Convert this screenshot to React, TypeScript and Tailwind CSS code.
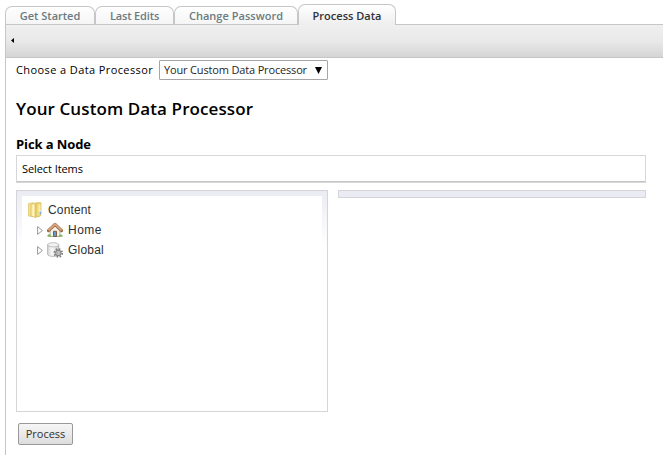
import React from "react";

function Tab({ label, className }: { label: string; className: string }) {
  return (
    <div
      className={`flex shrink-0 justify-center whitespace-nowrap border border-b-0 border-[#c6c6c8] bg-linear-to-b ${className}`}
    >
      {label}
    </div>
  );
}

function FolderIcon() {
  return (
    <svg width="16" height="18" viewBox="0 0 16 18" className="shrink-0">
      <defs>
        <linearGradient id="folder" x1="0" x2="1">
          <stop offset="0" stopColor="#f8e89c" />
          <stop offset=".5" stopColor="#fff5bd" />
          <stop offset="1" stopColor="#e2c25a" />
        </linearGradient>
      </defs>
      <path d="M8 3 9.5 1.8H14V14l-2 1.7H8z" fill="#f0d878" stroke="#d6b95c" strokeWidth=".8" />
      <path d="M11.5 3.5h2v9l-2 1.5z" fill="#f8ecb0" />
      <path d="M1.5 2.6 6.5 1.6v14l-5-.6z" fill="#f5e290" stroke="#dcc067" strokeWidth=".7" />
      <path d="M4 3.4 9 2v14.4l-5-1.2z" fill="url(#folder)" stroke="#d6b755" strokeWidth=".7" />
      <path d="M12.2 9.5h1.8v4h-1.8z" fill="#fff" />
      <path d="M12.5 10.5h1.4v3h-1.4z" fill="#69a9da" />
    </svg>
  );
}

function HomeIcon() {
  return (
    <svg width="16" height="16" viewBox="0 0 16 16" className="shrink-0">
      <path d="M3 8v6.5h10V8L8 3.5z" fill="#f4f1e7" stroke="#a5a08f" strokeWidth=".8" />
      <path d="M6.5 14.5V9.3h3v5.2z" fill="#659bc0" stroke="#75563a" strokeWidth=".9" />
      <path d="m1.5 8.6 6.5-6.3 6.5 6.3" fill="none" stroke="#9a6843" strokeWidth="3.1" strokeLinejoin="round" strokeLinecap="round" />
      <path d="m1.5 8.4 6.5-6.3 6.5 6.3" fill="none" stroke="#dca77e" strokeWidth="1.8" strokeLinejoin="round" />
      <path d="M.5 13.2c1-1.5 3.2-1.2 3.9 1.6H.5zM11.4 14.8c.6-2.6 3.2-3 4.1-1.4v1.4z" fill="#80b35c" />
    </svg>
  );
}

function DatabaseGearIcon() {
  return (
    <svg width="16" height="16" viewBox="0 0 16 16" className="shrink-0">
      <defs>
        <linearGradient id="cylinder" x1="0" x2="1">
          <stop offset="0" stopColor="#d4d4d4" />
          <stop offset=".4" stopColor="#fafafa" />
          <stop offset="1" stopColor="#c8c8c8" />
        </linearGradient>
      </defs>
      <path d="M.6 2.8v9.5c0 2.8 11.2 2.8 11.2 0V2.8z" fill="url(#cylinder)" stroke="#adadad" strokeWidth=".8" />
      <ellipse cx="6.2" cy="2.8" rx="5.6" ry="2.1" fill="#f2f2f2" stroke="#b2b2b2" strokeWidth=".8" />
      <circle cx="11.3" cy="11" r="3.9" fill="none" stroke="#808080" strokeWidth="1.8" strokeDasharray="1.6 1.46" />
      <circle cx="11.3" cy="11" r="2.6" fill="#e3e3e3" stroke="#858585" strokeWidth="1.2" />
      <circle cx="11.3" cy="11" r="1" fill="#fff" stroke="#858585" strokeWidth=".7" />
    </svg>
  );
}

function Expander() {
  return (
    <svg width="6" height="9" viewBox="0 0 6 9" className="mr-[4px] shrink-0">
      <path d="M.6 .6v7.8l4.8-3.9z" fill="#fff" stroke="#8c8c8c" strokeWidth=".9" />
    </svg>
  );
}

export default function App() {
  return (
    <div className="h-[455px] w-[663px] overflow-hidden bg-white pl-[5px] font-['Open_Sans',sans-serif] text-[11px] text-black">
      <div className="flex h-[24px] items-end font-semibold text-[#6b7b80]">
        <Tab label="Get Started" className="h-[18px] w-[90px] rounded-t-[7px] from-white to-[#f5f5f5] leading-[18px] tracking-[0px]" />
        <Tab label="Last Edits" className="h-[18px] w-[79px] rounded-t-[7px] from-white to-[#f5f5f5] leading-[18px] tracking-[-0.15px]" />
        <Tab label="Change Password" className="h-[18px] w-[124px] rounded-t-[7px] from-white to-[#f5f5f5] leading-[18px] tracking-[0.03px]" />
        <Tab label="Process Data" className="relative z-10 -mb-px h-[21px] w-[98px] rounded-t-[7px] from-white to-[#eeeeee] leading-[22px] tracking-[0px] text-[#303038]" />
      </div>
      <div className="h-[431px] border-l border-[#c6c6c8]">
        <div className="flex h-[34px] items-center border-y border-[#c6c6c8] bg-linear-to-b from-[#efefef] via-[#e9e9e9] to-[#d5d5d5] pl-[5px]">
          <svg width="4" height="5" viewBox="0 0 4 5" className="-mt-[2px]">
            <path d="M3 0v5L0 2.5z" fill="#000" />
          </svg>
        </div>
        <div className="pl-[10px]">
          <div className="flex h-[24px] items-center whitespace-nowrap">
            <span className="w-[143px] tracking-[0.4px]">Choose a Data Processor</span>
            <div className="flex h-[20px] w-[169px] items-center justify-between rounded-[1px] border border-[#a6a6a6] pr-[5px] pl-[4px] text-[#252525]">
              <span className="tracking-[-0.16px]">Your Custom Data Processor</span>
              <svg width="7" height="7" viewBox="0 0 7 7">
                <path d="M0 0h7L3.5 7z" fill="#000" />
              </svg>
            </div>
          </div>
          <h1 className="mt-[13px] h-[28px] whitespace-nowrap text-[17px] leading-[28px] font-semibold tracking-[0.1px]">Your Custom Data Processor</h1>
          <h2 className="mt-[12px] h-[20px] whitespace-nowrap text-[13px] leading-[18px] font-bold tracking-[-0.1px]">Pick a Node</h2>
          <div className="mt-0 flex h-[28px] w-[630px] items-center border border-[#d7d7da] pl-[5px] shadow-[inset_0_-1px_0_#c5c5c8]">
            <span className="tracking-[-0.08px]">Select Items</span>
          </div>
          <div className="mt-[7px] flex items-start gap-[10px]">
            <div className="h-[222px] w-[312px] border border-[#d5d5d9] bg-linear-to-b from-[#ebebf4] from-0% to-white to-25% p-[5px]">
              <div className="h-full bg-white pt-[4px] pl-[5px] font-['Liberation_Sans',Arial,sans-serif] text-[12px] text-[#303030]">
                <div className="flex h-[20px] items-center gap-[5px]">
                  <FolderIcon />
                  <span className="tracking-[0.15px]">Content</span>
                </div>
                <div className="flex h-[20px] items-center pl-[10px]">
                  <Expander />
                  <HomeIcon />
                  <span className="ml-[5px] tracking-[0.5px]">Home</span>
                </div>
                <div className="flex h-[20px] items-center pl-[10px]">
                  <Expander />
                  <DatabaseGearIcon />
                  <span className="ml-[5px] tracking-[0.2px]">Global</span>
                </div>
              </div>
            </div>
            <div className="h-[8px] w-[308px] border border-[#d5d5d9] bg-[#ebebf4]" />
          </div>
          <button className="mt-[11px] ml-[2px] flex h-[22px] w-[55px] items-center justify-center rounded-[2px] border border-[#999999] bg-linear-to-b from-[#f6f6f6] to-[#dddddd] text-[#303030]">
            Process
          </button>
        </div>
      </div>
    </div>
  );
}
